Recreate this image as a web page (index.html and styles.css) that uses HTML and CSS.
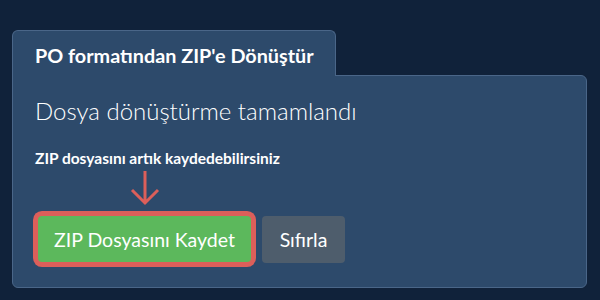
FILE: index.html
```html
<!DOCTYPE html>
<html lang="tr">
<head>
  <meta charset="UTF-8" />
  <meta name="viewport" content="width=device-width, initial-scale=1.0"/>
  <title>PO formatından ZIP'e Dönüştür</title>
  <link rel="stylesheet" href="styles.css">
</head>
<body>
  <div class="converter">
    <div class="tabs">
      <div class="tab">PO formatından ZIP'e Dönüştür</div>
    </div>

    <div class="panel">
      <h2>Dosya dönüştürme tamamlandı</h2>
      <p class="hint">ZIP dosyasını artık kaydedebilirsiniz</p>

      <div class="pointer">
        <svg width="30" height="36" viewBox="0 0 30 36">
          <path d="M15 1 V33 M2 20 L15 33 L28 20" fill="none" stroke="#dc5f5a" stroke-width="3"/>
        </svg>
      </div>

      <div class="actions">
        <button class="btn btn-save">ZIP Dosyasını Kaydet</button>
        <button class="btn btn-reset">Sıfırla</button>
      </div>
    </div>
  </div>
</body>
</html>
```

FILE: styles.css
```css
body {
  margin: 0;
  background-color: #10223a;
  font-family: Lato, "Open Sans", sans-serif;
  color: #ffffff;
}

.converter {
  padding: 30px 13px 14px 12px;
}

.tabs {
  display: flex;
}

.tab {
  background-color: #2d4a6b;
  border: 1px solid #4a6688;
  border-bottom: none;
  border-radius: 6px 6px 0 0;
  height: 45px;
  line-height: 49px;
  padding: 0 21px 0 22px;
  font-size: 19.8px;
  font-weight: bold;
  margin-bottom: -1px;
  position: relative;
  z-index: 1;
}

.panel {
  background-color: #2d4a6b;
  border: 1px solid #4a6688;
  border-radius: 0 6px 6px 6px;
  padding: 20px 22px 24px 22px;
}

.panel h2 {
  margin: 0;
  font-size: 24px;
  font-weight: 300;
  line-height: 30px;
}

.hint {
  margin: 23px 0 0 0;
  font-size: 15.5px;
  font-weight: bold;
  line-height: 18px;
}

.pointer {
  margin: 3px 0 0 95px;
  height: 36px;
}

.pointer svg {
  display: block;
}

.actions {
  display: flex;
  align-items: flex-start;
  gap: 11px;
  margin-top: 10px;
  padding-left: 3px;
}

.btn {
  font-family: Lato, "Open Sans", sans-serif;
  font-size: 19.5px;
  color: #ffffff;
  border: none;
  border-radius: 4px;
  height: 46px;
  padding: 0;
  white-space: nowrap;
}

.btn-save {
  background-color: #5cb85c;
  box-shadow: 0 0 0 5px #dc5f5a;
  width: 213px;
}

.btn-reset {
  background-color: #4e5d6c;
  height: 47px;
  width: 83px;
}
```
